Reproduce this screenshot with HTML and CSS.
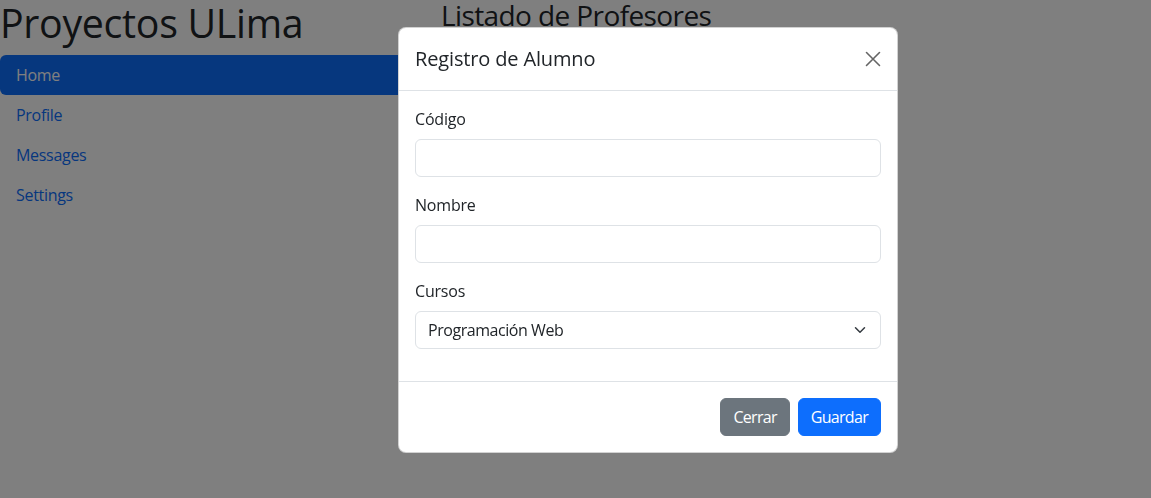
FILE: index.html
```html
<!DOCTYPE html>
<html lang="es">
<head>
<meta charset="utf-8">
<title>Proyectos ULima</title>
<link rel="stylesheet" href="styles.css">
</head>
<body>
<div class="page">
  <aside class="sidebar">
    <h1 class="brand">Proyectos ULima</h1>
    <nav class="nav">
      <a class="nav-link active" href="#">Home</a>
      <a class="nav-link" href="#">Profile</a>
      <a class="nav-link" href="#">Messages</a>
      <a class="nav-link" href="#">Settings</a>
    </nav>
  </aside>
  <main class="main">
    <h2 class="main-title">Listado de Profesores</h2>
  </main>
</div>
<div class="backdrop"></div>
<div class="modal">
  <div class="modal-header">
    <h5 class="modal-title">Registro de Alumno</h5>
    <button class="btn-close" type="button" aria-label="Close">
      <svg viewBox="0 0 16 16" width="16" height="16"><path d="M1.5 1.5 L14.5 14.5 M14.5 1.5 L1.5 14.5" stroke="#000" stroke-width="1.6" stroke-linecap="round" fill="none"/></svg>
    </button>
  </div>
  <div class="modal-body">
    <div class="field">
      <label class="label">Código</label>
      <div class="input"></div>
    </div>
    <div class="field">
      <label class="label">Nombre</label>
      <div class="input"></div>
    </div>
    <div class="field">
      <label class="label">Cursos</label>
      <div class="input select">
        <span class="select-text">Programación Web</span>
        <svg class="chevron" viewBox="0 0 16 16" width="16" height="12"><path d="M2 5l6 6 6-6" stroke="#343a40" stroke-width="2" stroke-linecap="round" stroke-linejoin="round" fill="none"/></svg>
      </div>
    </div>
  </div>
  <div class="modal-footer">
    <button class="btn btn-secondary" type="button">Cerrar</button>
    <button class="btn btn-primary" type="button">Guardar</button>
  </div>
</div>
</body>
</html>
```

FILE: styles.css
```css
* { box-sizing: border-box; }
html, body { margin: 0; padding: 0; }
body {
  font-family: "Open Sans", "Noto Sans", sans-serif;
  font-size: 16px;
  line-height: 1.5;
  color: #212529;
  background: #fff;
  width: 1151px;
  height: 498px;
  overflow: hidden;
}
.page {
  display: grid;
  grid-template-columns: 425px 1fr;
}
.brand {
  margin: 0 0 8px 0;
  font-size: 39.3px;
  font-weight: 500;
  line-height: 1.2;
  letter-spacing: -0.3px;
}
.nav { display: flex; flex-direction: column; }
.nav-link {
  display: block;
  padding: 8px 16px;
  color: #0d6efd;
  text-decoration: none;
  border-radius: 6px;
  letter-spacing: -0.3px;
}
.nav-link.active { background: #0d6efd; color: #fff; }
.main { padding-left: 16px; }
.main-title {
  margin: -1px 0 0 0;
  font-size: 28px;
  font-weight: 500;
  line-height: 1.2;
  letter-spacing: -0.6px;
}
.backdrop {
  position: fixed;
  inset: 0;
  background: rgba(0,0,0,.5);
}
.modal {
  position: absolute;
  left: 398px;
  top: 27px;
  width: 500px;
  background: #fff;
  border: 1px solid rgba(0,0,0,.175);
  border-radius: 8px;
}
.modal-header {
  display: flex;
  align-items: center;
  padding: 16px;
  border-bottom: 1px solid #dee2e6;
}
.modal-title {
  margin: 0;
  font-size: 20px;
  font-weight: 500;
  line-height: 1.5;
  letter-spacing: -0.15px;
}
.btn-close {
  margin: -8px -8px -8px auto;
  padding: 8px;
  width: 32px;
  height: 32px;
  border: 0;
  background: transparent;
  opacity: .6;
  display: flex;
  align-items: center;
  justify-content: center;
}
.modal-body { padding: 16px; }
.field { margin-bottom: 16px; }
.label { display: block; margin-bottom: 8px; letter-spacing: -0.2px; }
.input {
  height: 38px;
  border: 1px solid #dee2e6;
  border-radius: 6px;
  background: #fff;
}
.select {
  display: flex;
  align-items: center;
  justify-content: space-between;
  padding: 6px 12px 6px 12px;
}
.select-text { letter-spacing: -0.45px; }
.chevron { display: block; }
.modal-footer {
  display: flex;
  justify-content: flex-end;
  padding: 12px;
  border-top: 1px solid #dee2e6;
}
.btn {
  margin: 4px;
  padding: 6px 12px;
  font-family: inherit;
  font-size: 16px;
  line-height: 1.5;
  letter-spacing: -0.7px;
  color: #fff;
  border: 1px solid transparent;
  border-radius: 6px;
}
.btn-secondary { background: #6c757d; border-color: #6c757d; }
.btn-primary { background: #0d6efd; border-color: #0d6efd; }
```
